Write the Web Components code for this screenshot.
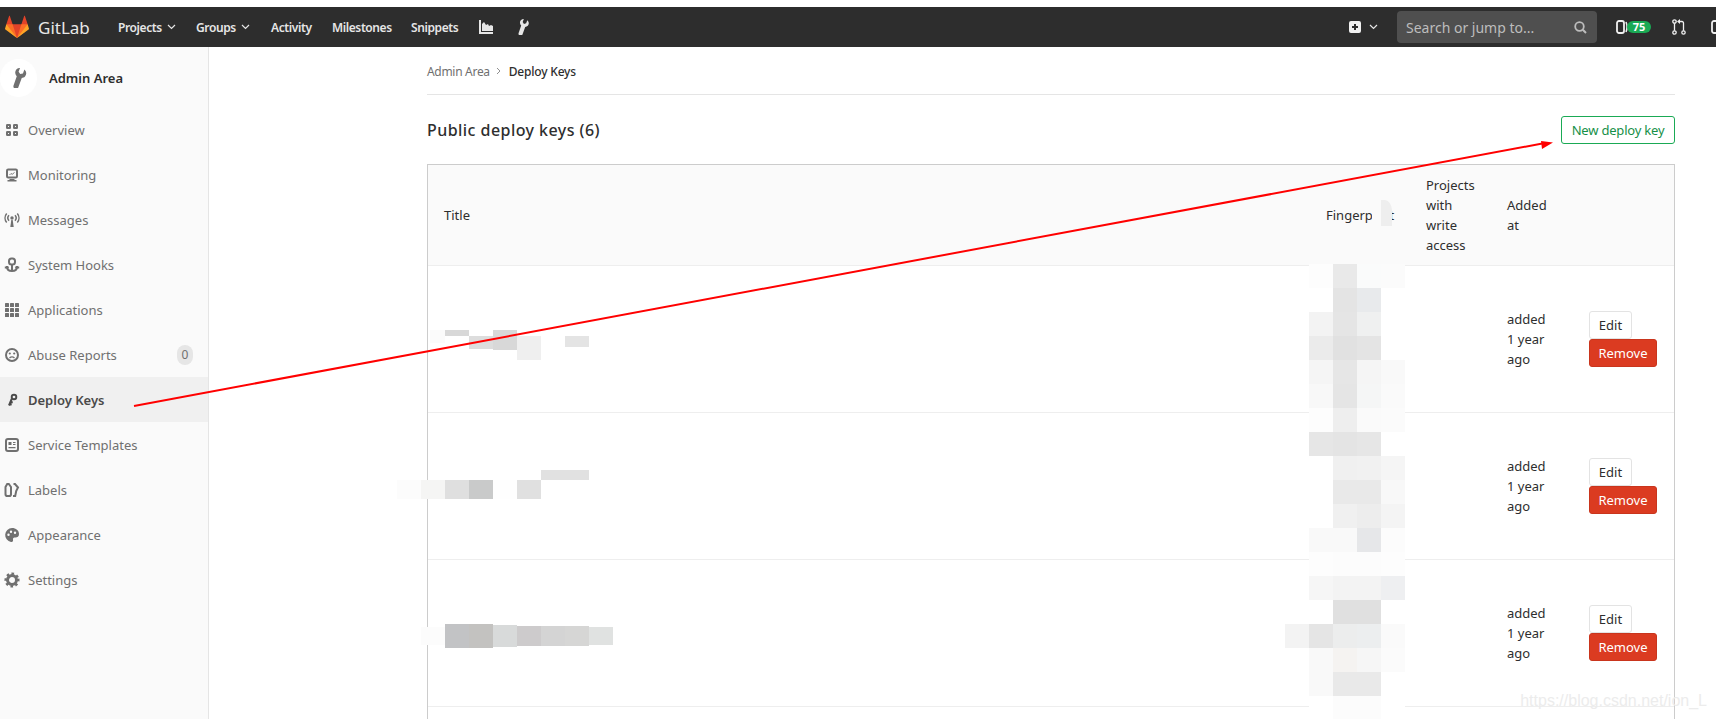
<!DOCTYPE html>
<html lang="en">

<head>
  <meta charset="UTF-8">
  <title>Deploy Keys</title>
  <style>
    html, body { margin: 0; height: 719px; overflow: hidden; background: #fff; }
    body { position: relative; font-family: "Noto Sans", "Open Sans", sans-serif; font-size: 13px; color: #2e2e2e; }
    .layout { display: flex; height: 672px; }
  </style>
</head>

<body>
  <gl-navbar></gl-navbar>
  <div class="layout">
    <gl-sidebar>
      <gl-nav-item icon="overview" label="Overview"></gl-nav-item>
      <gl-nav-item icon="monitoring" label="Monitoring"></gl-nav-item>
      <gl-nav-item icon="messages" label="Messages"></gl-nav-item>
      <gl-nav-item icon="hooks" label="System Hooks"></gl-nav-item>
      <gl-nav-item icon="applications" label="Applications"></gl-nav-item>
      <gl-nav-item icon="abuse" label="Abuse Reports" badge="0"></gl-nav-item>
      <gl-nav-item icon="key" label="Deploy Keys" active></gl-nav-item>
      <gl-nav-item icon="templates" label="Service Templates"></gl-nav-item>
      <gl-nav-item icon="labels" label="Labels"></gl-nav-item>
      <gl-nav-item icon="appearance" label="Appearance"></gl-nav-item>
      <gl-nav-item icon="settings" label="Settings"></gl-nav-item>
    </gl-sidebar>
    <deploy-keys-page></deploy-keys-page>
  </div>
  <blur-mask></blur-mask>
  <red-arrow></red-arrow>
  <csdn-mark>https://blog.csdn.net/ion_L</csdn-mark>

  <template id="gl-navbar">
    <style>
      :host { display: flex; align-items: center; height: 40px; margin-top: 7px; background: #2d2d2d; overflow: hidden; color: #e6e6e6; }
      svg { display: block; flex: none; }
      .logo { margin-left: 5px; }
      .brand { margin-left: 9px; width: 80px; font-size: 17px; color: #e8e8e8; }
      nav { display: flex; align-items: center; font-size: 12px; font-weight: 600; letter-spacing: -.4px; }
      nav span { display: flex; align-items: center; gap: 5px; }
      .right { display: flex; align-items: center; margin-left: auto; margin-right: -7px; flex: none; }
      .search { display: flex; align-items: center; justify-content: space-between; box-sizing: border-box; width: 200px; height: 32px; margin: 0 19px 0 19px; padding: 0 10px 0 9px; background: #4f4f4f; border-radius: 4px; color: #bdbdbd; font-size: 14px; }
      .badge { margin-left: -1px; width: 24px; height: 12px; line-height: 12px; border-radius: 6px; background: #1aaa55; color: #fff; font-size: 11px; font-weight: 700; text-align: center; }
    </style>
    <svg class="logo" width="24" height="24" viewBox="0 0 36 36">
      <path fill="#e24329" d="M2 14l9.38 9v-9l-4-12.28c-.205-.632-1.176-.632-1.38 0z" />
      <path fill="#e24329" d="M34 14l-9.38 9v-9l4-12.28c.205-.632 1.176-.632 1.38 0z" />
      <path fill="#e24329" d="M18 34.38 3 14h30z" />
      <path fill="#fc6d26" d="M18 34.38 11.38 14H2l4 11z" />
      <path fill="#fc6d26" d="M18 34.38 24.62 14H34l-4 11z" />
      <path fill="#fca326" d="M2 14L.1 20.16c-.18.565 0 1.2.5 1.56l17.42 12.66z" />
      <path fill="#fca326" d="M34 14l1.9 6.16c.18.565 0 1.2-.5 1.56L18 34.38z" />
    </svg>
    <div class="brand">GitLab</div>
    <nav>
      <span style="width:78px">Projects <svg width="9" height="6" viewBox="0 0 9 6"><path d="M1 1l3.5 3.5L8 1" fill="none" stroke="#e6e6e6" stroke-width="1.2" /></svg></span>
      <span style="width:75px">Groups <svg width="9" height="6" viewBox="0 0 9 6"><path d="M1 1l3.5 3.5L8 1" fill="none" stroke="#e6e6e6" stroke-width="1.2" /></svg></span>
      <span style="width:61px">Activity</span>
      <span style="width:79px">Milestones</span>
      <span style="width:68px">Snippets</span>
      <svg style="width:14px;height:14px;margin-right:22px" viewBox="0 0 14 14"><path fill="#e6e6e6" d="M0 0h2v12h12v2H0z" /><path fill="#e6e6e6" d="M3 11V4l2-2 2 3 2-1 1 2 2-1 2 1v5z" /></svg>
      <svg style="width:16px;height:16px" viewBox="0 0 16 16"><path fill="#e6e6e6" transform="rotate(-25 8 8)" d="M14.8 3.6 12.4 6l-2.2-.4-.4-2.2L12.2 1C10 .2 7.8.9 7 3c-.4 1.1-.3 2.1 0 2.9l-5.500 5.700c-.8.8-.8 2.100 0 2.900s2.100.8 2.900 0L10 8.900c.9.3 1.900.4 2.900 0 2.100-.9 2.800-3.100 1.900-5.300z" /></svg>
    </nav>
    <div class="right">
      <svg width="12" height="12" viewBox="0 0 12 12"><path fill="#f0f0f0" fill-rule="evenodd" d="M2 0h8a2 2 0 0 1 2 2v8a2 2 0 0 1-2 2H2a2 2 0 0 1-2-2V2a2 2 0 0 1 2-2zm3 3v2H3v2h2v2h2V7h2V5H7V3z" /></svg>
      <svg style="margin-left:8px" width="9" height="6" viewBox="0 0 9 6"><path d="M1 1l3.5 3.5L8 1" fill="none" stroke="#e6e6e6" stroke-width="1.2" /></svg>
      <div class="search"><span>Search or jump to...</span>
        <svg width="13" height="13" viewBox="0 0 13 13"><circle cx="5.500" cy="5.500" r="4.300" fill="none" stroke="#bdbdbd" stroke-width="1.800" /><path d="M8.800 8.800 12 12" stroke="#bdbdbd" stroke-width="2" /></svg>
      </div>
      <svg width="12" height="14" viewBox="0 0 12 14"><rect x="1" y="1" width="7" height="12" rx="2" fill="none" stroke="#f0f0f0" stroke-width="1.800" /><path d="M10 2q2 5 0 10" fill="none" stroke="#f0f0f0" stroke-width="1.500" /></svg>
      <div class="badge">75</div>
      <svg style="margin-left:21px" width="14" height="16" viewBox="0 0 14 16"><g fill="none" stroke="#f0f0f0" stroke-width="1.300"><circle cx="2.500" cy="2.500" r="1.700" /><circle cx="2.500" cy="13.500" r="1.700" /><circle cx="11.500" cy="13.500" r="1.700" /><path d="M2.500 4.300v7.500M11.500 11.700V4a1.500 1.500 0 0 0-1.500-1.500H7" /></g><path fill="#f0f0f0" d="M8 0v5L5 2.500z" /></svg>
      <svg style="margin-left:25px" width="12" height="14" viewBox="0 0 12 14"><rect x="1" y="1" width="10" height="12" rx="2" fill="none" stroke="#f0f0f0" stroke-width="1.800" /></svg>
    </div>
  </template>

  <template id="gl-sidebar">
    <style>
      :host { display: block; flex: none; box-sizing: border-box; width: 209px; height: 100%; background: #fafafa; border-right: 1px solid #e5e5e5; }
      .head { display: flex; align-items: center; gap: 12px; box-sizing: border-box; height: 60px; padding-top: 1px; font-size: 13px; font-weight: 600; color: #2e2e2e; }
      .avatar { display: flex; align-items: center; justify-content: center; width: 37px; height: 38px; border-radius: 50%; background: #fff; }
    </style>
    <div class="head">
      <div class="avatar"><svg width="20" height="20" viewBox="0 0 16 16"><path fill="#707070" transform="rotate(-25 8 8)" d="M14.8 3.6 12.400 6l-2.200-.4-.4-2.200L12.200 1C10 .2 7.800.9 7 3c-.4 1.100-.3 2.100 0 2.900l-5.500 5.700c-.8.8-.8 2.100 0 2.900s2.100.8 2.900 0L10 8.900c.9.3 1.900.4 2.900 0 2.100-.9 2.800-3.100 1.900-5.300z" /></svg></div>
      <span>Admin Area</span>
    </div>
    <slot></slot>
  </template>

  <template id="gl-nav-item">
    <style>
      :host { display: flex; align-items: center; box-sizing: border-box; height: 45px; padding: 0 15px 0 4px; color: #707070; font-size: 13px; }
      :host([active]) { background: #f0f0f0; color: #4a4a4a; font-weight: 600; }
      svg { flex: none; width: 16px; height: 16px; margin-right: 8px; }
      .badge { margin-left: auto; width: 16px; height: 20px; line-height: 20px; border-radius: 8px; background: #e6e6e6; text-align: center; font-size: 12px; }
      .badge:empty { display: none; }
    </style>
    <svg viewBox="0 0 16 16"></svg><span id="text"></span><span class="badge"></span>
  </template>

  <template id="deploy-keys-page">
    <style>
      :host { display: block; flex: none; box-sizing: border-box; width: 1507px; height: 672px; overflow: hidden; padding: 0 41px 0 218px; }
      .crumbs { display: flex; align-items: center; gap: 6px; box-sizing: border-box; height: 48px; padding-top: 1px; border-bottom: 1px solid #e5e5e5; font-size: 12px; letter-spacing: -.3px; color: #707070; }
      .crumbs b { margin-left: 1px; font-weight: 500; letter-spacing: -.2px; color: #2e2e2e; }
      .top { display: flex; align-items: center; justify-content: space-between; height: 69px; }
      h3 { margin: 0; font-size: 16px; font-weight: 500; letter-spacing: .45px; color: #2e2e2e; }
      button { box-sizing: border-box; height: 28px; width: 114px; padding: 0; border: 1px solid #1aaa55; border-radius: 3px; background: #fff; color: #168f48; font: inherit; font-size: 13px; letter-spacing: -.2px; }
    </style>
    <div class="crumbs"><span>Admin Area</span><svg width="6" height="8" viewBox="0 0 6 8"><path d="M1 1l3 3-3 3" fill="none" stroke="#909090" /></svg><b>Deploy Keys</b></div>
    <div class="top"><h3>Public deploy keys (6)</h3><button>New deploy key</button></div>
    <deploy-keys-table></deploy-keys-table>
  </template>

  <template id="deploy-keys-table">
    <style>
      :host { display: block; font-size: 13px; color: #2e2e2e; }
      table { width: 100%; table-layout: fixed; border-collapse: separate; border-spacing: 0; border: 1px solid #ccc; border-bottom: 0; }
      th { height: 100px; padding: 0 16px; background: #fafafa; font-weight: 400; text-align: left; line-height: 20px; border-bottom: 1px solid #eee; }
      td { height: 146px; padding: 0 16px; line-height: 20px; border-bottom: 1px solid #eee; vertical-align: middle; }
      tr.cut td { height: 12px; border-bottom: 0; }
      button { display: block; box-sizing: border-box; height: 28px; border-radius: 3px; font: inherit; font-size: 13px; }
      .edit { background: #fff; border: 1px solid #e3e3e3; color: #2e2e2e; width: 43px; padding: 0; }
      .remove { background: #db3b21; border: 1px solid #c9351d; color: #fff; width: 68px; padding: 0; }
    </style>
    <table>
      <colgroup><col><col style="width:100px"><col style="width:81px"><col style="width:82px"><col style="width:101px"></colgroup>
      <thead><tr><th>Title</th><th>Fingerprint</th><th>Projects with write access</th><th>Added at</th><th></th></tr></thead>
      <tbody></tbody>
    </table>
  </template>

  <template id="blur-mask">
    <style>
      :host { position: absolute; left: 0; top: 0; width: 1716px; height: 719px; pointer-events: none; }
      svg { display: block; }
    </style>
    <svg width="1716" height="719" viewBox="0 0 1716 719"></svg>
  </template>

  <template id="red-arrow">
    <style>
      :host { position: absolute; left: 0; top: 0; width: 1716px; height: 719px; pointer-events: none; }
      svg { display: block; }
    </style>
    <svg width="1716" height="719" viewBox="0 0 1716 719">
      <path d="M134 406 1545 143" stroke="#f00" stroke-width="2" />
      <path d="M1541 141 1553 142.500 1542 149z" fill="#f00" />
    </svg>
  </template>

  <template id="csdn-mark">
    <style>
      :host { position: absolute; right: 9px; top: 691px; font-family: "Liberation Sans", sans-serif; font-size: 16px; line-height: 20px; color: #ececec; }
    </style>
    <slot></slot>
  </template>
</body>
<script>
  const ICONS = {
    overview: '<g fill="none" stroke="currentColor" stroke-width="2"><rect x="3" y="3" width="3" height="3" rx=".3"/><rect x="10" y="3" width="3" height="3" rx=".3"/><rect x="3" y="10" width="3" height="3" rx=".3"/><rect x="10" y="10" width="3" height="3" rx=".3"/></g>',
    monitoring: '<rect x="3" y="2.500" width="10" height="8" rx="1.200" fill="none" stroke="currentColor" stroke-width="2"/><path d="M5.500 8l1.500-1.500 1.200.8L10.500 5.500" fill="none" stroke="currentColor" stroke-width=".9"/><path d="M5.500 12h5v1h2v1.500h-9V13h2z" fill="currentColor"/>',
    messages: '<circle cx="8" cy="6" r="1.700" fill="currentColor"/><path d="M7.300 8h1.400l1 7H6.300z" fill="currentColor"/><g fill="none" stroke="currentColor" stroke-width="1.500"><path d="M5 3.300a4 4 0 0 0 0 5.400M11 3.300a4 4 0 0 1 0 5.400M2.700 1.500a7 7 0 0 0 0 9M13.300 1.500a7 7 0 0 1 0 9"/></g>',
    hooks: '<rect x="5" y="1.500" width="6" height="6" rx="2.500" fill="none" stroke="currentColor" stroke-width="2"/><path d="M7 7h2v7H7z" fill="currentColor"/><path d="M3 9v1c0 2.500 2.200 4 5 4s5-1.500 5-4V9" fill="none" stroke="currentColor" stroke-width="2"/><path d="M.8 10.500h4M11.200 10.500h4" stroke="currentColor" stroke-width="2"/>',
    applications: '<g fill="currentColor"><rect x="1" y="1" width="4" height="4" rx=".6"/><rect x="6" y="1" width="4" height="4" rx=".6"/><rect x="11" y="1" width="4" height="4" rx=".6"/><rect x="1" y="6" width="4" height="4" rx=".6"/><rect x="6" y="6" width="4" height="4" rx=".6"/><rect x="11" y="6" width="4" height="4" rx=".6"/><rect x="1" y="11" width="4" height="4" rx=".6"/><rect x="6" y="11" width="4" height="4" rx=".6"/><rect x="11" y="11" width="4" height="4" rx=".6"/></g>',
    abuse: '<circle cx="8" cy="8" r="6" fill="none" stroke="currentColor" stroke-width="2"/><circle cx="5.800" cy="6.500" r="1.100" fill="currentColor"/><circle cx="10.200" cy="6.500" r="1.100" fill="currentColor"/><path d="M5.500 11c1.500-1.400 3.500-1.400 5 0" fill="none" stroke="currentColor" stroke-width="1.300"/>',
    key: '<circle cx="10" cy="5" r="2.300" fill="none" stroke="currentColor" stroke-width="1.900"/><path d="M7.700 7 5 13.500M6.700 9.800l2 .8M5.800 12l1.800.7" fill="none" stroke="currentColor" stroke-width="2"/>',
    templates: '<rect x="2" y="2" width="12" height="12" rx="2" fill="none" stroke="currentColor" stroke-width="2"/><rect x="4.500" y="5" width="3" height="3" fill="currentColor"/><path d="M9 5h2.500v1H9zM9 7h2.500v1H9zM4.500 10h7v1.200h-7z" fill="currentColor"/>',
    labels: '<g fill="none" stroke="currentColor" stroke-width="2"><path d="M1.500 5 3.200 2h1.600L7 5v7.200A1.800 1.800 0 0 1 5.200 14H3.300a1.800 1.800 0 0 1-1.800-1.800z"/><path d="M9.500 2h1.500L14 5.500l-1.800 3.500-1 5H9"/></g>',
    appearance: '<path fill="currentColor" fill-rule="evenodd" d="M8 1a7 7 0 0 0-1 13.900c1.800.3 2.300-1 2-2.200-.3-1.300.5-2.400 1.800-2.200 2 .3 4.200-.6 4.200-3.500C15 3.500 11.900 1 8 1zM4.500 6.500a1.200 1.200 0 1 1 0 2.400 1.200 1.200 0 0 1 0-2.400zM7 3.500a1.200 1.200 0 1 1 0 2.400 1.200 1.200 0 0 1 0-2.400zm4 1a1.200 1.200 0 1 1 0 2.400 1.200 1.200 0 0 1 0-2.400z"/>',
    settings: '<circle cx="8" cy="8" r="4.500" fill="none" stroke="currentColor" stroke-width="3"/><circle cx="8" cy="8" r="6.300" fill="none" stroke="currentColor" stroke-width="2.500" stroke-dasharray="2.470 2.470" transform="rotate(-11 8 8)"/>'
  }

  // [x, y, w, h, colour] of each pixelated block that hides key titles and fingerprints
  const TILES = [
    [430, 330, 15, 13, '#fbfbfb'], [445, 330, 24, 6, '#d8d8d8'], [469, 336, 24, 13, '#dddddd'], [493, 330, 24, 20, '#d8d8d8'], [517, 336, 24, 24, '#efefef'], [565, 336, 24, 11, '#e4e4e4'],
    [397, 480, 24, 19, '#fcfcfc'], [421, 480, 24, 19, '#f5f5f4'], [445, 480, 24, 19, '#dfdfdf'], [469, 480, 24, 19, '#c9caca'], [493, 480, 24, 19, '#fefefe'], [517, 480, 24, 19, '#e0e0e0'], [541, 470, 48, 10, '#e1e1e1'],
    [421, 627, 24, 18, '#fcfcfc'], [445, 624, 24, 24, '#c2c3c5'], [469, 624, 24, 24, '#c3c2c0'], [493, 625, 24, 22, '#d8dada'], [517, 626, 24, 20, '#cdcbcc'], [541, 626, 24, 20, '#d4d4d4'], [565, 626, 24, 20, '#d6d6d5'], [589, 627, 24, 18, '#e0e2e1'],
    [1372, 199, 20, 22, '#fafafa']
  ]
  const FINGER_COLS = [1309, 1333, 1357, 1381]
  const FINGER_ROWS = [
    [264, '#fdfdfd', '#e9e9e9', '#fafbfb', '#fbfbfb'],
    [288, '#ffffff', '#e4e4e4', '#e8eaec', '#ffffff'],
    [312, '#f3f3f3', '#e5e5e5', '#eff0f0', '#ffffff'],
    [336, '#ebebeb', '#e1e1e1', '#e4e4e4', '#ffffff'],
    [360, '#f5f5f5', '#e6e6e6', '#f5f5f5', '#f9f9f9'],
    [384, '#f8f8f8', '#e5e5e5', '#f5f6f6', '#fafafa'],
    [408, '#fdfdfd', '#eeeeee', '#fafafa', '#fbfbfb'],
    [432, '#e6e6e6', '#e4e4e4', '#e6e6e6', '#ffffff'],
    [456, '#ffffff', '#f0f0f0', '#f1f1f1', '#f5f5f5'],
    [480, '#ffffff', '#e9e9e9', '#e9e9e9', '#f8f8f8'],
    [504, '#ffffff', '#f0f0f0', '#ededed', '#f4f4f4'],
    [528, '#f9f9f9', '#f9f9f9', '#e6e7e9', '#fcfcfc'],
    [552, '#fdfdfd', '#fcfcfc', '#fcfcfc', '#fdfdfd'],
    [576, '#f6f6f6', '#f3f3f3', '#f3f3f3', '#eeeff1'],
    [600, '#ffffff', '#e0e0e0', '#e0e0e0', '#ffffff'],
    [624, '#e5e5e5', '#eceded', '#eceeef', '#fafafa'],
    [648, '#f9f9f9', '#f5f3f1', '#f6f6f6', '#fbfbfb'],
    [672, '#f9f9f9', '#e9e9e9', '#e9e9e9', '#ffffff'],
    [696, '#ffffff', '#fcfcfc', '#fcfcfc', '#ffffff']
  ]

  function shadowFrom(el) {
    const shadowRoot = el.attachShadow({ mode: 'open' })
    shadowRoot.appendChild(document.getElementById(el.localName).content.cloneNode(true))
    return shadowRoot
  }

  class SimpleElement extends HTMLElement {
    constructor() {
      super()
      shadowFrom(this)
    }
  }

  class GlNavItem extends HTMLElement {
    constructor() {
      super()
      const root = shadowFrom(this)
      root.querySelector('svg').innerHTML = ICONS[this.getAttribute('icon')] || ''
      root.getElementById('text').textContent = this.getAttribute('label') || ''
      root.querySelector('.badge').textContent = this.getAttribute('badge') || ''
    }
  }

  class DeployKeysTable extends HTMLElement {
    constructor() {
      super()
      const root = shadowFrom(this)
      const body = root.querySelector('tbody')
      for (let i = 0; i < 3; i++) {
        const row = document.createElement('tr')
        row.innerHTML = '<td></td><td></td><td></td><td>added<br>1 year<br>ago</td>' +
          '<td><button class="edit">Edit</button><button class="remove">Remove</button></td>'
        body.appendChild(row)
      }
      // the next row starts just above the bottom of the window
      const cut = document.createElement('tr')
      cut.className = 'cut'
      cut.innerHTML = '<td></td><td></td><td></td><td></td><td></td>'
      body.appendChild(cut)
    }
  }

  class BlurMask extends HTMLElement {
    constructor() {
      super()
      const root = shadowFrom(this)
      let rects = ''
      FINGER_ROWS.forEach((row) => {
        FINGER_COLS.forEach((x, i) => {
          rects += `<rect x="${x}" y="${row[0]}" width="24" height="24" fill="${row[i + 1]}"/>`
        })
      })
      rects += '<rect x="1285" y="624" width="24" height="24" fill="#f3f3f3"/>'
      TILES.forEach((t) => {
        rects += `<rect x="${t[0]}" y="${t[1]}" width="${t[2]}" height="${t[3]}" fill="${t[4]}"/>`
      })
      rects += '<path d="M1381 200h4q6 1 7 10v16h-11z" fill="#eeeeee"/>'
      root.querySelector('svg').innerHTML = rects
    }
  }

  ;['gl-navbar', 'gl-sidebar', 'deploy-keys-page', 'red-arrow', 'csdn-mark'].forEach((name) => {
    window.customElements.define(name, class extends SimpleElement { })
  })
  window.customElements.define('gl-nav-item', GlNavItem)
  window.customElements.define('deploy-keys-table', DeployKeysTable)
  window.customElements.define('blur-mask', BlurMask)
</script>

</html>
